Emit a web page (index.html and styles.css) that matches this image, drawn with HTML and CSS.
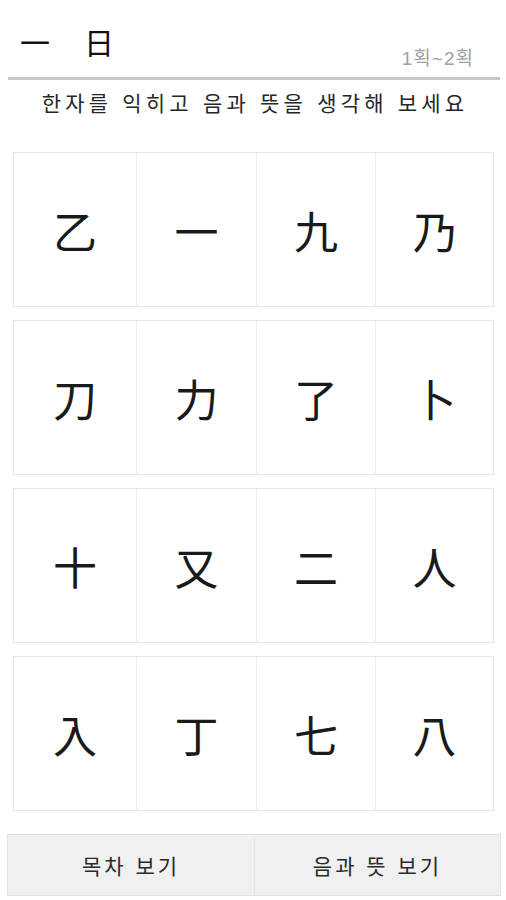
FILE: index.html
```html
<!DOCTYPE html>
<html lang="ko">
<head>
<meta charset="utf-8">
<link rel="stylesheet" href="styles.css">
</head>
<body>
<div class="page">
  <header class="head">
    <div class="title"><span class="tch">一</span><span class="tch">日</span></div>
    <div class="strokes">1획~2획</div>
  </header>
  <div class="rule"></div>
  <p class="guide">한자를 익히고 음과 뜻을 생각해 보세요</p>
  <div class="rows">
    <div class="row"><div class="cell">乙</div><div class="cell">一</div><div class="cell">九</div><div class="cell">乃</div></div>
    <div class="row"><div class="cell">刀</div><div class="cell">力</div><div class="cell">了</div><div class="cell">卜</div></div>
    <div class="row"><div class="cell">十</div><div class="cell">又</div><div class="cell">二</div><div class="cell">人</div></div>
    <div class="row"><div class="cell">入</div><div class="cell">丁</div><div class="cell">七</div><div class="cell">八</div></div>
  </div>
  <div class="buttons">
    <div class="btn">목차 보기</div>
    <div class="btn">음과 뜻 보기</div>
  </div>
</div>
</body>
</html>
```
FILE: styles.css
```css
html, body {
  margin: 0;
  padding: 0;
  background: #ffffff;
}
.page {
  width: 506px;
  height: 900px;
  font-family: "Noto Sans CJK KR", "Noto Sans CJK SC", sans-serif;
  color: #222;
  box-sizing: border-box;
}
.head {
  display: flex;
  justify-content: space-between;
  align-items: flex-end;
  height: 71px;
  padding: 0 32px 0 20px;
  box-sizing: border-box;
}
.title {
  display: flex;
  gap: 34px;
  align-self: flex-start;
  margin-top: 21px;
  font-family: "Noto Sans CJK SC", "Noto Sans CJK KR", serif;
  font-size: 30px;
  line-height: 40px;
  font-weight: 400;
  color: #111;
}
.strokes {
  font-family: "Liberation Sans", "Noto Sans CJK KR", sans-serif;
  font-size: 19px;
  line-height: 22px;
  letter-spacing: 1px;
  color: #a0a0a0;
  margin-bottom: 1px;
}
.rule {
  height: 3px;
  margin: 6px 6px 0 8px;
  background: #c8c8c8;
}
.guide {
  margin: 8px 0 0 0;
  text-align: center;
  font-size: 21px;
  line-height: 28px;
  letter-spacing: 4.2px;
  color: #262626;
  padding-left: 4px;
}
.rows {
  display: flex;
  flex-direction: column;
  gap: 13px;
  margin: 36px 12px 0 13px;
}
.row {
  display: grid;
  grid-template-columns: 122px 120px 119px 1fr;
  height: 155px;
  border: 1px solid #e6e6e6;
  box-sizing: border-box;
}
.cell {
  display: flex;
  align-items: center;
  justify-content: center;
  border-left: 1px solid #efefef;
  font-family: "Noto Sans CJK SC", "Noto Sans CJK KR", serif;
  font-size: 44px;
  font-weight: 400;
  color: #1a1a1a;
}
.cell:first-child {
  border-left: none;
}
.buttons {
  display: grid;
  grid-template-columns: 1fr 1fr;
  margin: 23px 5px 0 7px;
  height: 62px;
  border: 1px solid #e2e2e2;
  background: #f0f0f0;
  box-sizing: border-box;
}
.btn {
  display: flex;
  align-items: center;
  justify-content: center;
  font-size: 21px;
  letter-spacing: 3px;
  color: #2a2a2a;
}
.btn + .btn {
  border-left: 1px solid #e4e4e4;
}
```
